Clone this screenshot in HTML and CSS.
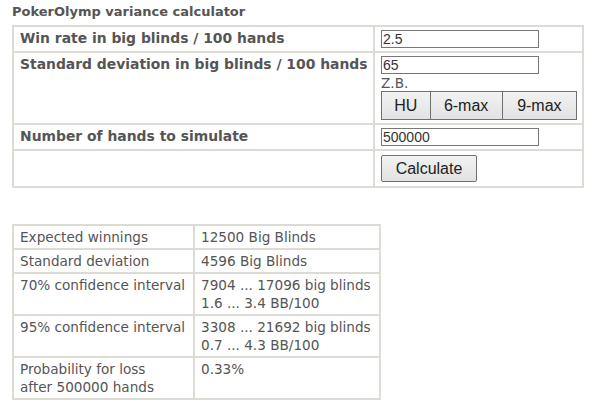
FILE: index.html
```html
<!DOCTYPE html>
<html lang="en">
<head>
    <meta charset="UTF-8">
    <title>PokerOlymp variance calculator</title>
    <link rel="stylesheet" href="styles.css">
</head>
<body>

    <div class="calculator">
        <h3 class="calc-title">PokerOlymp variance calculator</h3>

        <table class="input-table">
            <tr>
                <th>Win rate in big blinds / 100 hands</th>
                <td><input type="text" class="num-input" value="2.5"></td>
            </tr>
            <tr>
                <th>Standard deviation in big blinds / 100 hands</th>
                <td>
                    <input type="text" class="num-input" value="65">
                    <div class="hint">Z.B.</div>
                    <div class="preset-group">
                        <button class="btn preset">HU</button><button class="btn preset">6-max</button><button class="btn preset">9-max</button>
                    </div>
                </td>
            </tr>
            <tr>
                <th>Number of hands to simulate</th>
                <td><input type="text" class="num-input" value="500000"></td>
            </tr>
            <tr>
                <th></th>
                <td><button class="btn calc-btn">Calculate</button></td>
            </tr>
        </table>

        <!-- results of the last run -->
        <table class="result-table">
            <tr>
                <td>Expected winnings</td>
                <td>12500 Big Blinds</td>
            </tr>
            <tr>
                <td>Standard deviation</td>
                <td>4596 Big Blinds</td>
            </tr>
            <tr>
                <td>70% confidence interval</td>
                <td>7904 ... 17096 big blinds<br>1.6 ... 3.4 BB/100</td>
            </tr>
            <tr>
                <td>95% confidence interval</td>
                <td>3308 ... 21692 big blinds<br>0.7 ... 4.3 BB/100</td>
            </tr>
            <tr>
                <td>Probability for loss<br>after 500000 hands</td>
                <td>0.33%</td>
            </tr>
        </table>
    </div>

</body>
</html>
```

FILE: styles.css
```css
body {
    margin: 0;
    background: #fff;
    font-family: "DejaVu Sans", Verdana, sans-serif;
    font-size: 13.6px;
    color: #555;
}
.calculator {
    padding: 4px 12px;
}
.calc-title {
    margin: 0 0 5px 0;
    font-size: 13px;
    line-height: 16px;
    font-weight: bold;
}

.input-table,
.result-table {
    border-collapse: collapse;
    table-layout: fixed;
}
.input-table {
    width: 572px;
    border: 2px solid #dddcd4;
}
.input-table th,
.input-table td {
    border: 2px solid #dddcd4;
    vertical-align: top;
    padding: 3px 5px 3px 6px;
    line-height: 16px;
}
.input-table th {
    width: 348px;
    text-align: left;
    font-weight: bold;
    font-size: 13.9px;
    white-space: nowrap;
}

.num-input {
    display: block;
    box-sizing: border-box;
    width: 158px;
    height: 18px;
    margin: 0;
    padding: 0 1px;
    border: 1px solid #777;
    font-family: "Liberation Sans", Arial, sans-serif;
    font-size: 14px;
    color: #333;
}
.hint {
    margin-top: 1px;
    line-height: 16px;
}

.preset-group {
    display: flex;
}
.btn {
    box-sizing: border-box;
    margin: 0;
    border: 1px solid #707070;
    border-radius: 2px;
    background: linear-gradient(#f2f2f2, #e2e2e2);
    font-family: "Liberation Sans", Arial, sans-serif;
    font-size: 16px;
    color: #222;
}
.preset {
    height: 29px;
    padding: 0;
    border-radius: 0;
}
.preset:nth-child(1) { width: 50px; }
.preset:nth-child(2) { width: 73px; border-left: none; }
.preset:nth-child(3) { width: 75px; border-left: none; }
.calc-btn {
    display: block;
    width: 96px;
    height: 27px;
    margin-top: 1px;
    margin-bottom: 1px;
}

.result-table {
    margin-top: 36px;
    width: 369px;
    border: 2px solid #dddcd4;
}
.result-table td {
    border: 2px solid #dddcd4;
    vertical-align: top;
    padding: 2px 6px 2px 6px;
    line-height: 18px;
}
.result-table td:first-child {
    width: 167px;
}
```
